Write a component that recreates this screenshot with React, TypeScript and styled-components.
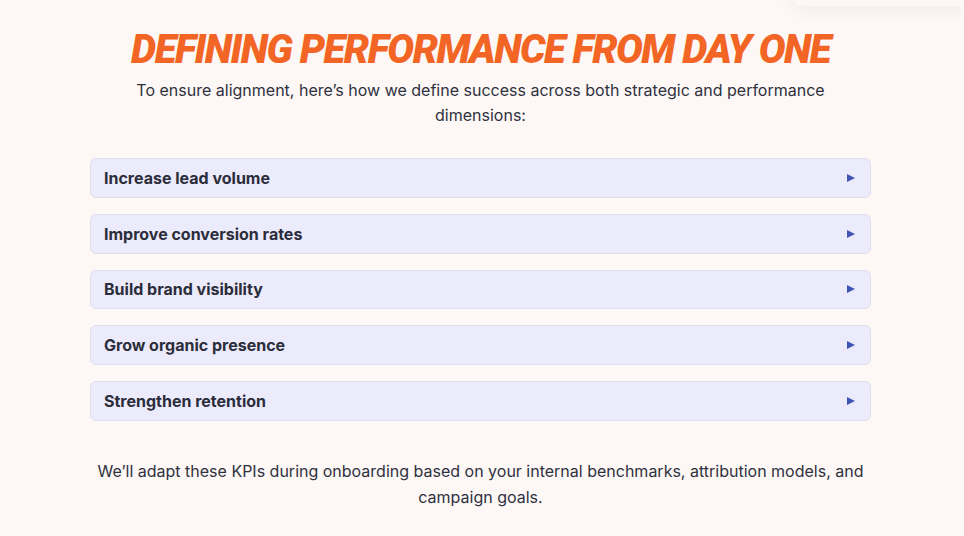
import React from "react";
import styled, { createGlobalStyle } from "styled-components";

const Global = createGlobalStyle`
  html, body { margin: 0; padding: 0; background: #fdf8f5; }
  body { font-family: Inter, "Noto Sans", sans-serif; color: #2b2d3a; }
`;

const Page = styled.main`
  position: relative;
  width: 961px;
  height: 536px;
  overflow: hidden;
  background: #fdf8f5;
  display: flex;
  flex-direction: column;
  align-items: center;
  padding-top: 28px;
  box-sizing: border-box;
`;

const Glow = styled.div`
  position: absolute;
  top: -40px;
  right: -20px;
  width: 190px;
  height: 46px;
  border-radius: 12px;
  background: #fdf8f5;
  box-shadow: 0 4px 16px rgba(0, 0, 0, 0.05);
`;

const Title = styled.h1`
  margin: 0;
  font-family: Roboto, "Liberation Sans", sans-serif;
  font-weight: 900;
  font-style: italic;
  font-size: 40px;
  line-height: 44px;
  color: #f26524;
  text-transform: uppercase;
  letter-spacing: -1.5px;
`;

const Lead = styled.p`
  margin: 6px 0 0;
  width: 700px;
  text-align: center;
  font-size: 16px;
  line-height: 25px;
  color: #2f3140;
`;

const List = styled.ul`
  list-style: none;
  margin: 30px 0 0;
  padding: 0;
  width: 781px;
  display: flex;
  flex-direction: column;
  gap: 16px;
`;

const Item = styled.li`
  height: 39.75px;
  box-sizing: border-box;
  display: flex;
  align-items: center;
  justify-content: space-between;
  padding: 0 15px 0 13px;
  background: #ecebfc;
  border: 1px solid #dfdeee;
  border-radius: 6px;
  font-size: 16px;
  font-weight: 700;
  color: #2b2d3a;
`;

const Arrow = styled.span`
  width: 0;
  height: 0;
  border-top: 4.5px solid transparent;
  border-bottom: 4.5px solid transparent;
  border-left: 8px solid #3f54b4;
`;

const Foot = styled.p`
  margin: 37px 0 0;
  width: 790px;
  text-align: center;
  font-size: 16px;
  line-height: 26px;
  color: #2f3140;
`;

const goals = [
  "Increase lead volume",
  "Improve conversion rates",
  "Build brand visibility",
  "Grow organic presence",
  "Strengthen retention",
];

export default function App() {
  return (
    <Page>
      <Global />
      <Glow />
      <Title>Defining Performance From Day One</Title>
      <Lead>
        To ensure alignment, here’s how we define success across both strategic and performance
        dimensions:
      </Lead>
      <List>
        {goals.map((g) => (
          <Item key={g}>
            {g}
            <Arrow />
          </Item>
        ))}
      </List>
      <Foot>
        We’ll adapt these KPIs during onboarding based on your internal benchmarks, attribution
        models, and campaign goals.
      </Foot>
    </Page>
  );
}
